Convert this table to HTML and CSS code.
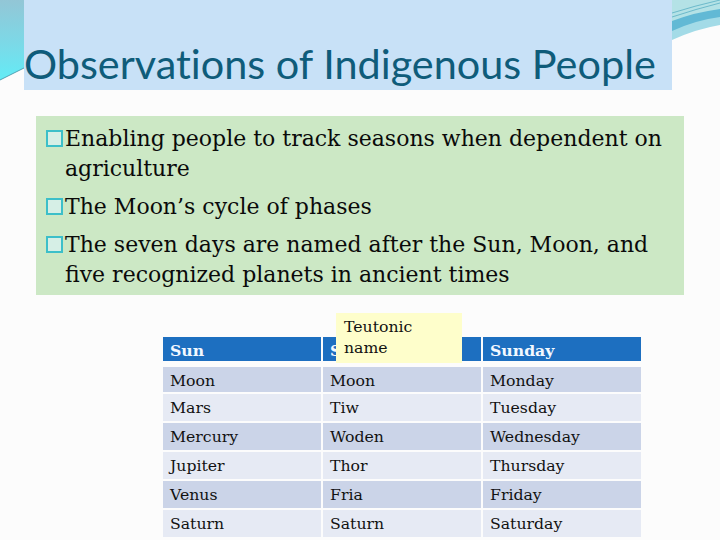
FILE: index.html
```html
<!DOCTYPE html>
<html>
<head>
<meta charset="utf-8">
<link rel="stylesheet" href="styles.css">
</head>
<body>
<div class="slide">
  <svg class="deco-left" width="24" height="82" viewBox="0 0 24 82">
    <defs>
      <linearGradient id="gl" x1="0" y1="0" x2="0" y2="1">
        <stop offset="0" stop-color="#93c6d6"/>
        <stop offset="0.6" stop-color="#79dbe9"/>
        <stop offset="1" stop-color="#62ecf6"/>
      </linearGradient>
    </defs>
    <path d="M0,0 L24,0 L24,68 L0,80 Z" fill="url(#gl)"/>
    <path d="M24,68 L0,80" stroke="#3d8fa3" stroke-width="0.8" fill="none"/>
  </svg>
  <svg class="deco-right" width="48" height="42" viewBox="0 0 48 42">
    <path d="M0,0 L48,0 L48,25 Q24,29 0,40 Z" fill="#a3dbe7"/>
    <path d="M0,0 L48,0 L48,17 Q24,20 0,31 Z" fill="#62b9d5"/>
    <path d="M0,0 L48,0 L48,9 Q24,12 0,21 Z" fill="#b4e2e6"/>
    <path d="M0,13 Q22,6 48,0" stroke="#4ea7bf" stroke-width="0.7" fill="none"/>
    <path d="M0,17 Q24,9 48,3" stroke="#4ea7bf" stroke-width="0.7" fill="none"/>
  </svg>

  <header class="title-box">
    <h1 class="title">Observations of Indigenous People</h1>
  </header>

  <section class="content-box">
    <p class="item"><span class="bullet"></span>Enabling people to track seasons when dependent on agriculture</p>
    <p class="item"><span class="bullet"></span>The Moon’s cycle of phases</p>
    <p class="item"><span class="bullet"></span>The seven days are named after the Sun, Moon, and five recognized planets in ancient times</p>
  </section>

  <div class="table-wrap">
    <div class="note">Teutonic<br>name</div>
    <div class="grid">
      <div class="cell head">Sun</div>
      <div class="cell head">Sun</div>
      <div class="cell head">Sunday</div>

      <div class="cell odd">Moon</div>
      <div class="cell odd">Moon</div>
      <div class="cell odd">Monday</div>

      <div class="cell even">Mars</div>
      <div class="cell even">Tiw</div>
      <div class="cell even">Tuesday</div>

      <div class="cell odd">Mercury</div>
      <div class="cell odd">Woden</div>
      <div class="cell odd">Wednesday</div>

      <div class="cell even">Jupiter</div>
      <div class="cell even">Thor</div>
      <div class="cell even">Thursday</div>

      <div class="cell odd">Venus</div>
      <div class="cell odd">Fria</div>
      <div class="cell odd">Friday</div>

      <div class="cell even">Saturn</div>
      <div class="cell even">Saturn</div>
      <div class="cell even">Saturday</div>
    </div>
  </div>
</div>
</body>
</html>
```

FILE: styles.css
```css
html, body {
  margin: 0;
  padding: 0;
  background: #fcfcfc;
}

.slide {
  position: relative;
  width: 720px;
  height: 540px;
  overflow: hidden;
  background: #fcfcfc;
}

.deco-left {
  position: absolute;
  left: 0;
  top: 0;
}

.deco-right {
  position: absolute;
  left: 672px;
  top: 0;
}

.title-box {
  margin-left: 24px;
  width: 648px;
  height: 90px;
  background: #c8e1f7;
  box-sizing: border-box;
  padding-top: 39px;
}

.title {
  margin: 0;
  font-family: "Lato", "Open Sans", sans-serif;
  font-weight: 400;
  font-size: 41.4px;
  line-height: 48px;
  color: #0f5c7a;
  white-space: nowrap;
  font-variant-ligatures: none;
}

.content-box {
  margin-top: 26px;
  margin-left: 36px;
  width: 648px;
  height: 179px;
  box-sizing: border-box;
  background: #cce8c5;
  padding: 8px 12px 0 29px;
  font-family: "DejaVu Serif", serif;
  font-size: 22px;
  color: #0a0a0a;
}

.item {
  margin: 0 0 8px 0;
  line-height: 30px;
  text-indent: -19px;
}

.bullet {
  display: inline-block;
  width: 13px;
  height: 13px;
  border: 2px solid #3cbfc9;
  background: #d6efe6;
  margin-right: 2px;
  vertical-align: -1px;
  text-indent: 0;
}

.table-wrap {
  position: relative;
  margin-left: 163px;
  margin-top: 42px;
  width: 478px;
}

.grid {
  display: grid;
  grid-template-columns: 158px 158px 158px;
  grid-template-rows: 26px repeat(6, 27px);
  column-gap: 2px;
  row-gap: 2px;
  font-family: "DejaVu Serif", serif;
  font-size: 15.7px;
  color: #111;
}

.cell {
  box-sizing: border-box;
  padding-left: 7px;
  line-height: 28px;
  white-space: nowrap;
}

.head {
  background: #1d6fc0;
  color: #f2f8ff;
  font-weight: bold;
  line-height: 27px;
  margin-bottom: 2px;
}

.grid .cell:nth-child(4),
.grid .cell:nth-child(5),
.grid .cell:nth-child(6) {
  margin-top: 2px;
}

.odd {
  background: #cbd4e8;
}

.even {
  background: #e6eaf4;
}

.note {
  position: absolute;
  left: 173px;
  top: -24px;
  width: 126px;
  height: 50px;
  box-sizing: border-box;
  padding: 3px 0 0 8px;
  background: #fefecb;
  font-family: "DejaVu Serif", serif;
  font-size: 15.7px;
  line-height: 21px;
  color: #111;
  z-index: 2;
}
```
